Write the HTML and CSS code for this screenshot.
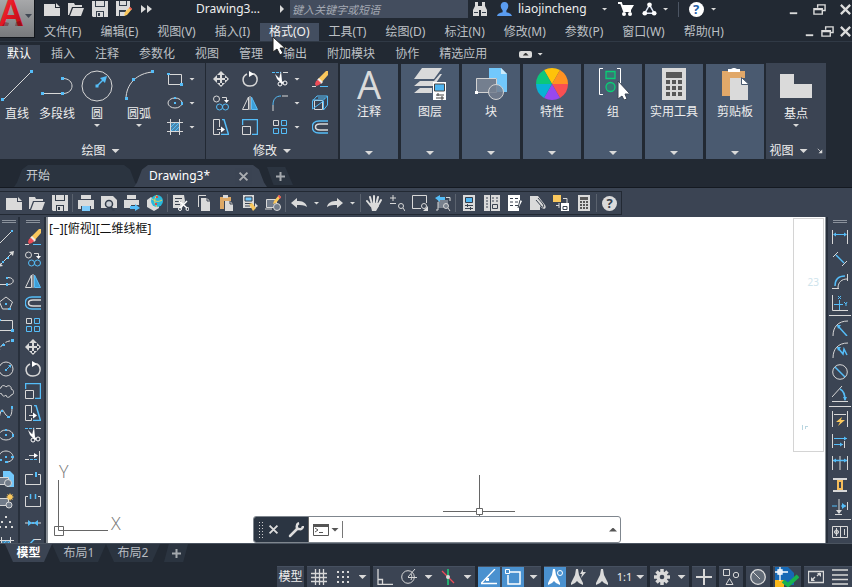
FILE: index.html
```html
<!DOCTYPE html>
<html lang="zh-CN">
<head>
<meta charset="utf-8">
<title>Drawing3</title>
<link rel="stylesheet" href="styles.css">
</head>
<body>
<svg class="sprite" aria-hidden="true">
  <defs>
    <linearGradient id="red" x1="0" y1="0" x2="1" y2="1"><stop offset="0" stop-color="#ff3b44"/><stop offset=".5" stop-color="#e01420"/><stop offset="1" stop-color="#a80d18"/></linearGradient>
    <!-- files and title bar -->
    <symbol id="new" viewBox="0 0 16 16"><path class="lf" d="M0 3h11v4h5v8H0z"/><path class="lf" d="M12 2l4 4h-4z"/></symbol>
    <symbol id="open" viewBox="0 0 16 16"><path class="lf" d="M0 2h6l1 2h7v2H4L1 14H0z"/><path class="lf" d="M5 7h11l-3 8H2z"/></symbol>
    <symbol id="save" viewBox="0 0 16 16"><path class="lf" d="M0 0h16v16H1l-1-1z"/><path class="df" d="M3 0h10v6H3zM4 10h8v6H4z"/><path class="lf" d="M4 0h8v5H4zM5 11h6v5H5z"/><path class="df" d="M6 12h2v3H6z"/></symbol>
    <symbol id="saveas" viewBox="0 0 16 16"><path class="lf" d="M0 0h14v9l-6 6H0z"/><path class="df" d="M3 0h8v5H3zM3 9h7v6H3z"/><path class="lf" d="M4 0h6v4H4zM4 11h5v4H4z"/><path class="yf" d="M8 15l1-4 5-5 2 2-5 6z"/><path fill="#ef4c59" d="M13 7l1-1 2 2-1 1z"/></symbol>
    <symbol id="ff" viewBox="0 0 16 16"><path class="lf" d="M3 4l5 4-5 4zM9 4l5 4-5 4z"/></symbol>
    <symbol id="find" viewBox="0 0 16 16"><path class="lf" d="M3 1h3v4h4V1h3v4l2 4v6H9V9H7v6H1V9l2-4z"/><path class="df" d="M2 11h4v1H2zM10 11h4v1h-4z"/></symbol>
    <symbol id="user" viewBox="0 0 16 16"><path fill="#5a9cf0" d="M8 0c5 0 5 6 2 9v2c3 1 5 1 6 4H0c1-3 3-3 6-4V9C3 6 3 0 8 0z"/></symbol>
    <symbol id="cart" viewBox="0 0 16 16"><path fill="none" stroke="#fff" stroke-width="2" d="M0 2h3l3 8h7"/><path class="wf" d="M4 4h12l-3 5H6z"/><circle class="wf" cx="6" cy="13" r="2"/><circle class="wf" cx="12" cy="13" r="2"/></symbol>
    <symbol id="share" viewBox="0 0 16 16"><path fill="none" stroke="#dfe6f5" stroke-width="1.6" d="M8 3L3 12h10z"/><circle class="wf" cx="8" cy="3" r="2.5"/><circle class="wf" cx="3" cy="12" r="2.5"/><circle class="wf" cx="13" cy="12" r="2.5"/></symbol>
    <symbol id="min" viewBox="0 0 14 14"><path class="lf" d="M3 10h8v2H3z"/></symbol>
    <symbol id="restore" viewBox="0 0 14 14"><path class="l2" d="M5 5V2h8v6h-3"/><path class="l2" d="M1 6h9v6H1zM1 7h9"/></symbol>
    <symbol id="close" viewBox="0 0 14 14"><path fill="none" stroke="#dcdcdc" stroke-width="2.4" d="M2 2l10 10M12 2L2 12"/></symbol>
    <!-- drawing tools -->
    <symbol id="line-l" viewBox="0 0 32 32"><path class="l" d="M2 30L30 2"/><path class="bf" d="M0 28h3v3H0zM29 0h3v3h-3z"/></symbol>
    <symbol id="pline-l" viewBox="0 0 32 32"><path class="l" d="M2 23.500h20M22 8.500c12 0 12 15 0 15"/><path class="bf" d="M0 22h3v3H0zM20 22h3v3h-3zM20 7h3v3h-3z"/></symbol>
    <symbol id="circle-l" viewBox="0 0 32 32"><circle class="l" cx="16" cy="16" r="15"/><path class="b" stroke-width="1.500" d="M16 16l8-8"/><path class="bf" d="M26 6l-2 7-5-5zM14.500 14.500h3v3h-3z"/></symbol>
    <symbol id="arc-l" viewBox="0 0 32 32"><path class="l" d="M3 29C3 14 14 3 30 2"/><path class="bf" d="M2 27h3v3H2zM28 0h3v3h-3zM9 8h3v3H9z"/></symbol>
    <symbol id="line" viewBox="0 0 16 16"><path class="l" d="M1 15L14 2"/><path class="bf" d="M0 14h2v2H0zM13 1h2v2h-2z"/></symbol>
    <symbol id="xline" viewBox="0 0 16 16"><path class="l" d="M2 14L14 2"/><path class="lf" d="M0 16l1-5 4 4zM16 0l-5 1 4 4z"/><path class="bf" d="M4 10h2v2H4zM9 6h2v2H9z"/></symbol>
    <symbol id="pline" viewBox="0 0 16 16"><path class="l" d="M1 11.500h9M10 4.500c7 0 7 7 0 7"/><path class="bf" d="M0 10h2v2H0zM8 10h2v3H8zM8 4h2v2H8z"/></symbol>
    <symbol id="polygon" viewBox="0 0 16 16"><path class="l" d="M8 2l6.500 5-3 7h-7l-3-7z"/><path class="bf" d="M7 8h2v2H7zM10 13h3v2h-3z"/></symbol>
    <symbol id="rect" viewBox="0 0 16 16"><path class="l" d="M1.500 3.500h13v10h-13z"/><path class="bf" d="M0 2h3v2H0zM13 12h3v3h-3z"/></symbol>
    <symbol id="arc" viewBox="0 0 16 16"><path class="l" stroke-dasharray="5 2" d="M1 15C1 7 6 2 15 1.500"/><path class="bf" d="M0 13h2v3H0zM13 0h3v3h-3zM4 5h3v2H4z"/></symbol>
    <symbol id="circle" viewBox="0 0 16 16"><circle class="l" cx="8" cy="8" r="7"/><path class="b" d="M8 9l4-4"/><path class="bf" d="M7 8h2v2H7zM10 4h3v3z"/></symbol>
    <symbol id="cloud" viewBox="0 0 16 16"><path class="l" d="M4 11C-1 10 0 5 3 5c0-3 4-3 5-1 3-3 6 0 5 2 4 1 3 6 0 6-1 3-5 3-5 0-2 2-4 1-4-1z"/></symbol>
    <symbol id="spline" viewBox="0 0 16 16"><path class="l" d="M1 14C4-2 5 7 8 10s6 3 6-8"/><path class="bf" d="M0 13h2v3H0zM13 1h2v3h-2zM3 5h2v2H3zM9 11h3v2H9z"/></symbol>
    <symbol id="ellipse" viewBox="0 0 16 16"><ellipse class="l" cx="8" cy="8" rx="7" ry="5"/><path class="bf" d="M7 2h2v2H7zM7 7h2v2H7zM14 7h2v3h-2z"/></symbol>
    <symbol id="earc" viewBox="0 0 16 16"><path class="l" d="M2 11C-1 4 5 2 8 2s7 2 7 6c0 3-2 4-5 5"/><path class="bf" d="M7 7h2v2H7zM7 12h3v2H7zM1 10h3v2H1zM13 7h3v2h-3z"/></symbol>
    <symbol id="insert" viewBox="0 0 16 16"><path fill="#72c8fc" d="M5 0h7l4 4v12H9V6H5z"/><path fill="#727c8a" stroke="#d8d8d8" d="M.5 6.500h10v7H.5z"/><circle fill="#727c8a" stroke="#d8d8d8" cx="10" cy="12" r="3.500"/></symbol>
    <symbol id="block" viewBox="0 0 16 16"><path fill="#727c8a" stroke="#d8d8d8" d="M.5 5.500h10v7H.5z"/><circle fill="#727c8a" stroke="#d8d8d8" cx="11" cy="12" r="3"/><path class="yf" d="M12 0l1 2 2-1-1 2 2 1-2 1 1 2-2-1-1 2-1-2-2 1 1-2-2-1 2-1-1-2 2 1z"/></symbol>
    <symbol id="points" viewBox="0 0 16 16"><path class="lf" d="M7 1h2v2H7zM3 6h2v2H3zM11 6h2v2h-2zM7 11h2v2H7zM1 11h2v2H1zM13 11h2v2h-2z"/></symbol>
    <symbol id="hatch" viewBox="0 0 16 16"><path class="bf" opacity=".55" d="M4 4h8v8H4z"/><path class="b" d="M4 8l4-4M4 12l8-8M8 12l4-4"/><path class="l" d="M3.500 0v16M12.500 0v16M0 3.500h16M0 12.500h16"/></symbol>
    <!-- modify tools -->
    <symbol id="erase" viewBox="0 0 16 16"><path fill="#fac85d" d="M6 8l8-8h2v4l-7 8z"/><path fill="#f4ebe4" d="M5 9l2-2 4 4-2 2z"/><path fill="#ee4c57" d="M4 10l2-1 3 3-2 2-3 1-1-2z"/><path class="l" d="M0 15.500h4"/><path class="b" d="M8 15.500h8"/></symbol>
    <symbol id="copy" viewBox="0 0 16 16"><circle class="l" cx="3.500" cy="4" r="3"/><circle class="b" cx="6.500" cy="12" r="3"/><circle class="b" cx="12.500" cy="12" r="3"/><path class="l" d="M9 2.500h4.500V6"/><path class="wf" d="M11 5h5l-2.500 3z"/></symbol>
    <symbol id="mirror" viewBox="0 0 16 16"><path class="l" d="M6.500 2v12.500h-6z"/><path fill="#3c9fd8" stroke="#5cbdf6" d="M9.500 2v12.500h6z"/><path class="l" d="M8 1v14"/></symbol>
    <symbol id="offset" viewBox="0 0 16 16"><path class="b" stroke-width="1.500" d="M16 2H7C-2 2-2 14 7 14h9"/><path class="l" stroke-width="1.500" d="M16 5H8C2 5 2 11 8 11h8"/></symbol>
    <symbol id="array" viewBox="0 0 16 16"><path class="l" d="M1.500 1.500h5v5h-5z"/><path class="b" d="M9.500 1.500h5v5h-5zM1.500 9.500h5v5h-5zM9.500 9.500h5v5h-5z"/></symbol>
    <symbol id="move" viewBox="0 0 16 16"><path class="lf" d="M7 2h2v12H7zM2 7h12v2H2zM8 0l4 4H4zM8 16l4-4H4zM0 8l4-4v8zM16 8l-4-4v8z"/></symbol>
    <symbol id="rotate" viewBox="0 0 16 16"><path class="l" stroke-width="1.500" d="M5 3C-1 6 0 15 8 15c8 0 9-9 4-12L8 3"/><path class="wf" d="M7 0l5 3-5 3z"/></symbol>
    <symbol id="scale" viewBox="0 0 16 16"><path class="b" stroke-width="1.500" d="M.5 6V.500h15v15H10"/><path class="l" d="M.5 7.500h8v8h-8z"/></symbol>
    <symbol id="stretch" viewBox="0 0 16 16"><path class="l" d="M6.500 8V.500h-6v15h6V13"/><path class="b" stroke-width="1.500" d="M9 .500h2l4.500 15H8"/><path class="l" d="M4 10.500h6"/><path class="wf" d="M8 7.500l4 3-4 3z"/></symbol>
    <symbol id="trim" viewBox="0 0 16 16"><path class="b" stroke-dasharray="3 1" d="M0 1.500h9"/><path class="l" d="M11 1.500h5"/><path class="wf" d="M9 0l1 10-2 1-1-3zM3 3l9 9-2 1-5-5z"/><circle class="w" cx="8" cy="13" r="2"/><circle class="w" cx="13" cy="12" r="2"/></symbol>
    <symbol id="extend" viewBox="0 0 16 16"><path class="l" d="M4 6.500h7M14.500 2v12"/><path class="wf" d="M9 4l4 2.500L9 9z"/><path class="l" d="M0 10.500h4"/><path class="b" stroke-dasharray="3 1" d="M5 10.500h8"/></symbol>
    <symbol id="break1" viewBox="0 0 16 16"><path class="l" d="M8 3.500H.500v10h15v-10H13"/><path class="b" stroke-width="2" d="M11 1v5"/></symbol>
    <symbol id="break2" viewBox="0 0 16 16"><path class="l" d="M3 3.500H.500v10h15v-10H13"/><path class="b" stroke-width="1.500" d="M5.500 1v5M10.500 1v5"/></symbol>
    <symbol id="join" viewBox="0 0 16 16"><path class="l" d="M0 8h16"/><path class="bf" d="M3 5l4 3-4 3zM13 5L9 8l4 3zM7 7h2v2H7z"/></symbol>
    <symbol id="chamfer" viewBox="0 0 16 16"><path class="l" d="M8 2.500h8M2 10v6"/><path class="b" stroke-width="1.500" d="M9 2.500L2 10"/></symbol>
    <symbol id="fillet" viewBox="0 0 16 16"><path class="b" d="M1 10C1 4 4 1 9 1"/><path class="l" d="M1 10v6M10 1h6"/></symbol>
    <symbol id="cube" viewBox="0 0 16 16"><path class="l" d="M2.500 5.500h8v9h-8z"/><path class="b" d="M.5 14V6L5 1h10.500v9l-4 5V6zM.5 5h11l4-4M6 3h7"/></symbol>
    <!-- dimension tools -->
    <symbol id="dlin" viewBox="0 0 16 16"><path class="l" d="M.5 1v14M15.500 1v14"/><path class="b" d="M2 5.500h12"/><path class="bf" d="M1 5.500l3-2v4zM15 5.500l-3-2v4z"/></symbol>
    <symbol id="dal" viewBox="0 0 16 16"><path class="l" d="M1 6l5-5M10 15l5-5"/><path class="b" stroke-width="1.500" d="M4 4l8 8"/></symbol>
    <symbol id="darc" viewBox="0 0 16 16"><path class="b" stroke-width="1.500" d="M3 13C3 6 6 3 13 3"/><path class="l" d="M6 15c0-6 4-9 9-9M0 15.500h7M15.500 1v7"/></symbol>
    <symbol id="dord" viewBox="0 0 16 16"><path class="l" d="M.5 0v15.500H16"/><path class="b" d="M7.500 5v10M2 9.500h9M6 1l3 3M9 1L6 4M12 7l2 2 1-2M14 9v2"/></symbol>
    <symbol id="drad" viewBox="0 0 16 16"><path class="l" d="M1 16C1 7 6 1 16 1"/><path class="b" stroke-width="1.500" d="M6 6l9 10"/><path class="bf" d="M5 5h4L6 9z"/></symbol>
    <symbol id="djog" viewBox="0 0 16 16"><path class="l" d="M1 16C1 7 6 1 16 1"/><path class="b" stroke-width="1.500" d="M6 6l5 6 1-5 3 6"/><path class="bf" d="M5 5h4L6 9z"/></symbol>
    <symbol id="ddia" viewBox="0 0 16 16"><circle class="l" cx="8" cy="8" r="7.300"/><path class="b" stroke-width="1.500" d="M3 3l10 10"/></symbol>
    <symbol id="dang" viewBox="0 0 16 16"><path class="l" d="M0 15.500h16M0 11L10 0"/><path class="b" stroke-width="1.500" d="M8 3c4 2 5 6 5 11"/><path class="bf" d="M11 11h4l-2 4z"/></symbol>
    <symbol id="dquick" viewBox="0 0 16 16"><path class="l" d="M.5 0v16M15.500 0v16M2 3.500h12"/><path class="yf" d="M10 6L4 11h4l-2 4 7-6H9z"/></symbol>
    <symbol id="dbase" viewBox="0 0 16 16"><path class="l" d="M.5 1v14M12.500 8v7"/><path class="b" d="M2 5.500h13M2 11.500h9"/><path class="bf" d="M15 5.500l-3-2v4zM11 11.500l-3-2v4z"/></symbol>
    <symbol id="dcont" viewBox="0 0 16 16"><path class="l" d="M.5 1v14M8 1v14M15.500 1v14"/><path class="b" stroke-width="1.500" d="M1 5.500h14"/><path class="bf" d="M1 5.500l3-2v4zM15 5.500l-3-2v4z"/></symbol>
    <symbol id="dspace" viewBox="0 0 16 16"><path class="l" stroke-width="2" d="M1 2h14M1 14h14"/><path fill="none" stroke="#f5bd5b" stroke-width="2" d="M6 4h4v8H6z"/></symbol>
    <symbol id="dbreak" viewBox="0 0 16 16"><path class="b" d="M0 7h5M9 7h5"/><path class="bf" d="M10 4l4 3-4 3z"/><path class="l" d="M7 0v14M3 15.500h7M15.500 3v8"/><path class="lf" d="M4 11h6l-3 4z"/></symbol>
    <symbol id="dtol" viewBox="0 0 16 16"><path class="l" d="M.5 2.500h15v11H.5zM8.500 2v12M4.500 4v8M2 8h5M12.500 5v6"/><circle class="l" cx="4.500" cy="8" r="2"/></symbol>
    <!-- standard toolbar -->
    <symbol id="print" viewBox="0 0 16 16"><path class="lf" d="M3 0h10v4H3zM0 5h16v9h-3v-3H3v3H0z"/><path fill="#7ecbfb" d="M4 11h8v5H4z"/></symbol>
    <symbol id="preview" viewBox="0 0 16 16"><path class="lf" d="M0 1h12l4 4v8H0z"/><circle fill="#c9ced4" stroke="#333d4b" stroke-width="1.500" cx="8" cy="9" r="3.500"/><path stroke="#333d4b" stroke-width="2" d="M10 12l3 4"/></symbol>
    <symbol id="publish" viewBox="0 0 16 16"><path class="lf" d="M3 0h9v4H3zM0 5h15v5H7v3H0z"/><path class="bf" d="M6 11h5V9l5 4-5 3v-2H6z"/></symbol>
    <symbol id="globe" viewBox="0 0 16 16"><path class="lf" d="M0 5l4-3 8 6v5l-5 3-7-4z"/><circle fill="#28b9dc" cx="10" cy="6" r="6"/><path fill="none" stroke="#e9d35c" d="M5 4c4 3 7 3 10 1M10 0c-4 5-2 9 0 12"/><path fill="#e04b4b" d="M9 1h2v2H9zM8 8h2v2H8z"/></symbol>
    <symbol id="cutc" viewBox="0 0 16 16"><path class="lf" d="M0 0h11l1 6-3 7H0z"/><path class="d" d="M2 3.500h7M2 6.500h6M2 9.500h5"/><path class="w" stroke-width="1.500" d="M6 6l8 7M14 6l-7 7"/><circle class="w" cx="14.500" cy="14" r="1.500"/><circle class="w" cx="7" cy="14" r="1.500"/></symbol>
    <symbol id="copyc" viewBox="0 0 16 16"><path class="l" d="M2.500 12V.500H10"/><path class="lf" d="M5 3h6l3 3v10H5z"/><path class="d" d="M11 3v3h3"/></symbol>
    <symbol id="pastec" viewBox="0 0 16 16"><path fill="#dca866" d="M1 2h11v4H5v8H1z"/><path class="lf" d="M4 0h5v3H4zM6 6h5l3 3v7H6z"/><path class="d" d="M11 6v3h3"/></symbol>
    <symbol id="match" viewBox="0 0 16 16"><path class="lf" d="M1 0h11v13H1z"/><path fill="#72c8fc" stroke="#333d4b" d="M3 2h7v4H3z"/><path class="d" d="M3 8.500h7M3 11h5"/><path class="yf" d="M7 9l3-1 4 5-3 3z"/><path class="lf" d="M13 8l3 3-3 2z"/></symbol>
    <symbol id="bedit" viewBox="0 0 16 16"><path fill="#727c8a" stroke="#d8d8d8" d="M1.500 4.500h10v8h-10zM0 14h7"/><circle fill="#727c8a" stroke="#d8d8d8" cx="12" cy="12" r="3.500"/><path class="yf" d="M8 9l1-3 5-6 2 2-5 6z"/><path fill="#ef4c59" d="M13 1l1-1 2 2-1 2z"/></symbol>
    <symbol id="undo" viewBox="0 0 16 16"><path class="lf" d="M0 8l6-5v3c5 0 9 1 10 6-3-2-6-2-10-2v3z"/></symbol>
    <symbol id="redo" viewBox="0 0 16 16"><path class="lf" d="M16 8l-6-5v3c-5 0-9 1-10 6 3-2 6-2 10-2v3z"/></symbol>
    <symbol id="pan" viewBox="0 0 16 16"><path fill="none" stroke="#dedede" stroke-width="2" stroke-linecap="round" d="M1 6l4 5M4 2l2 7M8 1v8M12 2l-2 8M15 5l-4 7"/><path class="lf" d="M4 8h8l1 3-3 5H6z"/></symbol>
    <symbol id="zoomrt" viewBox="0 0 16 16"><path class="l" d="M4 0v6M1 3h6M1 8.500h6"/><circle class="l" cx="12" cy="11" r="2.500"/><path class="l" d="M14 13l2 3"/></symbol>
    <symbol id="zoomwin" viewBox="0 0 16 16"><path class="l" d="M9 13.500H.500V.500h14V8"/><circle class="l" cx="12" cy="11" r="2.500"/><path class="lf" d="M16 11v5h-5z"/></symbol>
    <symbol id="zoomprev" viewBox="0 0 16 16"><path fill="#79818d" d="M3 5h10v8H3z"/><path class="l" d="M3 7v8H1M11 2.500h4V6"/><path class="bf" d="M0 3l5-3v2h5v3H5v2z"/><circle class="l" cx="11" cy="11" r="2.500"/><path class="l" d="M13 13l2 3"/></symbol>
    <symbol id="props" viewBox="0 0 16 16"><path class="lf" d="M2 0h12v16H2z"/><path fill="#50b5f0" stroke="#333d4b" d="M4.500 2.500h7v5h-7z"/><path class="d" d="M4 10.500h8M4 13.500h8M6.500 9v3M9.500 12v3"/></symbol>
    <symbol id="dcenter" viewBox="0 0 16 16"><path class="lf" d="M0 0h16v16H0z"/><path class="d" d="M6.500 0v16M2 3h2M2 6h2M2 9h2M2 12h2M8 3h2M12 3h2M8 6h2M12 6h2M8.500 9.500h5v4h-5z"/></symbol>
    <symbol id="palettes" viewBox="0 0 16 16"><path class="wf" d="M1 0h12v5l2 1-3 6v4H1z"/><path class="d" d="M3 3.500h3M8 3.500h3M3 7h3M8 7h3M3 10.500h3M8 10.500h3M11 13l2-8"/></symbol>
    <symbol id="sheets" viewBox="0 0 16 16"><path class="lf" d="M0 1h8l7 9c2 3-1 5-3 3l-2-2v4H0z"/><path class="d" d="M6 5l6 7c2 1 2-1 1-3L8 3"/></symbol>
    <symbol id="markup" viewBox="0 0 16 16"><path class="yf" d="M0 0h8v7H0z"/><path class="l" d="M3 10.500h3M10 3.500h4V8M6 8v5"/><path class="wf" d="M8 8h8v8H8z"/><path class="d" d="M10 11.500h4v3h-4z"/></symbol>
    <symbol id="calc" viewBox="0 0 24 32"><path class="lf" d="M0 0h24v32H0z"/><path fill="#585858" d="M4 4h16v6H4zM4 12h4v4H4zM10 12h4v4h-4zM16 12h4v4h-4zM4 18h4v4H4zM10 18h4v4h-4zM16 18h4v4h-4zM4 24h4v4H4zM10 24h4v4h-4zM16 24h4v4h-4z"/></symbol>
    <!-- large ribbon pictures -->
    <symbol id="layers" viewBox="0 0 32 32"><path class="lf" d="M8 0h20L20 11H0zM6 13h14l6-7h2l-8 12H0zM6 20h12v5H0z"/><path class="wf" d="M19 14h13v18H19z"/><path fill="#50b5f0" stroke="#444" d="M20.500 16h10v7h-10z"/><path stroke="#444" d="M22 27h8M22 30h8M24 25v3M28 28v4"/></symbol>
    <symbol id="blocks" viewBox="0 0 32 32"><path fill="#72c8fc" d="M14 0h12l6 6v18H22V10h-8z"/><path fill="#cdeafa" d="M26 0v6h6z"/><path fill="#747f8f" stroke="#d2d2d2" d="M1.500 10.500h20v14h-20z"/><circle fill="#747f8f" fill-opacity=".85" stroke="#d2d2d2" cx="21" cy="24" r="7.500"/><path class="wf" d="M0 23h3v3H0z"/></symbol>
    <symbol id="wheel" viewBox="-16 -16 32 32"><path fill="#ffc20a" d="M0 0L-8-14Q0-18 8-14z"/><path fill="#ff9222" d="M0 0L8-14Q16-9 16 0z"/><path fill="#f94f52" d="M0 0h16Q16 9 8 14z"/><path fill="#9748ef" d="M0 0l8 14Q0 18-8 14z"/><path fill="#08b2d5" d="M0 0l-8 14Q-16 9-16 0z"/><path fill="#0bc77b" d="M0 0h-16Q-16-9-8-14z"/></symbol>
    <symbol id="group" viewBox="0 0 32 32"><path fill="none" stroke="#fff" d="M6 .500H2.500v26H6M20 .500h3.500V18"/><path fill="#3a7574" stroke="#09cf76" stroke-width="1.300" d="M9 3.500h9v7H9z"/><circle fill="#3a7574" stroke="#09cf76" stroke-width="1.300" cx="13.500" cy="19" r="4.500"/><path class="wf" stroke="#3b4453" d="M21 13v18l4-3 2 4 3-1-2-5h5z"/></symbol>
    <symbol id="clip" viewBox="0 0 28 32"><path fill="#e1a869" d="M1 3h23v7H9v18H1z"/><path class="wf" d="M7 1h3l2-1h2l2 1h3v3H7z"/><path class="lf" d="M9 10h11l7 6v16H9z"/><path fill="#fff" stroke="#4a5a70" d="M20.500 9.500v7H28z"/></symbol>
    <symbol id="base" viewBox="0 0 32 24"><path class="lf" d="M0 0h14v10h18v14H0z"/></symbol>
    <!-- status bar -->
    <symbol id="grid" viewBox="0 0 16 16"><path class="l" stroke-width="1.300" d="M4.500 0v16M8.500 0v16M12.500 0v16M0 4.500h16M0 8.500h16M0 12.500h16"/></symbol>
    <symbol id="snap" viewBox="0 0 16 16"><path class="l" stroke-width="2" stroke-dasharray="2 3" d="M2 3h12M2 8h12M2 13h12"/></symbol>
    <symbol id="ortho" viewBox="0 0 16 16"><path class="l" stroke-width="1.300" d="M1 0v15.500h15M1 10.500h4.500v5"/></symbol>
    <symbol id="polar" viewBox="0 0 16 16"><circle class="l" cx="7" cy="8" r="6.300"/><path class="l" d="M7 8l7-8M7 8.500h9M10 5c1 1 1 4 0 6"/></symbol>
    <symbol id="iso" viewBox="0 0 16 16"><path stroke="#24ae70" stroke-width="2" d="M8 0v16"/><path stroke="#ee4c57" stroke-width="1.300" d="M2 2l12 12"/><circle class="lf" cx="8" cy="8" r="2"/></symbol>
    <symbol id="track" viewBox="0 0 16 16"><path class="w" stroke-width="1.300" d="M14 0L0 14.500h16"/><path class="wf" d="M5 9h3v3H5z"/></symbol>
    <symbol id="osnap" viewBox="0 0 16 16"><path class="w" stroke-width="1.500" d="M5 3h10v12H3V6"/><path class="w" d="M.5.500h4v4h-4z"/></symbol>
    <symbol id="anno" viewBox="0 0 16 16"><path class="lf" d="M7 0h2l1 6 4 8v2l-4-2-2-2-2 2-4 2v-2l4-8z"/></symbol>
    <symbol id="annoo" viewBox="0 0 16 16"><path class="wf" d="M6 0h2l1 6 4 8v2l-4-2-2-2-2 2-4 2v-2l4-8z"/><circle class="w" cx="13" cy="4" r="2.500"/></symbol>
    <symbol id="annob" viewBox="0 0 16 16"><path class="lf" d="M6 0h2l1 6 4 8v2l-4-2-2-2-2 2-4 2v-2l4-8zM13 0l-3 5h2l-1 4 5-6h-3z"/></symbol>
    <symbol id="gear" viewBox="-8 -8 16 16"><path class="l" stroke-width="3.500" d="M0-8V8M-8 0H8M-5.500-5.500l11 11M5.500-5.500l-11 11"/><circle class="lf" r="5.500"/><circle fill="#3b4453" r="2.300"/></symbol>
    <symbol id="plus" viewBox="0 0 16 16"><path class="l" stroke-width="2" d="M8 0v16M0 8h16"/></symbol>
    <symbol id="plus-s" viewBox="0 0 9 9"><path fill="none" stroke="#a4a8ad" stroke-width="2" d="M4.500 0v9M0 4.500h9"/></symbol>
    <symbol id="shapes" viewBox="0 0 16 16"><path class="l" d="M.5.500h6v6h-6zM6.500 9.500l3.500 6H3z"/><circle class="l" cx="13" cy="6" r="2.700"/></symbol>
    <symbol id="disc" viewBox="0 0 16 16"><circle fill="#626b77" stroke="#ddd" stroke-width="1.300" cx="8" cy="8" r="7.300"/><path class="l" d="M3 3l7 7"/></symbol>
    <symbol id="trust" viewBox="0 0 24 20"><path fill="#1769b5" d="M0 0h13l6 6v12H0z"/><path fill="#fbb819" d="M0 13h9v7H0z"/><path class="w" stroke-width="1.300" d="M5 0v14M0 5h13M3 3h4v4H3z"/><path fill="none" stroke="#18b34d" stroke-width="4" d="M8 14l5 4L23 9"/></symbol>
    <symbol id="full" viewBox="0 0 16 16"><path class="l" stroke-width="1.300" d="M.5 2.500h15v11H.5zM4 11l3-3M9 7l3-3"/><path class="lf" d="M3 8v4h4zM9 4h4v4z"/></symbol>
    <symbol id="menu" viewBox="0 0 16 16"><path class="l" stroke-width="1.500" d="M0 1h16M0 6h16M0 10.500h16M0 15h16"/></symbol>
    <symbol id="term" viewBox="0 0 16 12"><path fill="#fff" stroke="#555" d="M.5.500h15v11H.5z"/><path fill="#555" d="M0 0h16v3H0z"/><path fill="none" stroke="#555" d="M2 4l3 2-3 2M6 8.500h4"/></symbol>
    <symbol id="wrench" viewBox="0 0 16 16"><path fill="none" stroke="#ddd" stroke-width="2.500" stroke-linecap="round" d="M2 14l7-7"/><path fill="none" stroke="#ddd" stroke-width="2.500" d="M11 1c-3 1-3 6 0 6 2 1 4-1 4-3"/></symbol>
  </defs>
</svg>

<header class="head">
  <button class="app" aria-label="应用程序菜单"><svg viewBox="0 0 34 38"><text x="-2" y="26" fill="url(#red)">A</text><path fill="#5e0a10" opacity=".4" d="M2 26l3-4 4 1-1 3zM15 26l1-4 4-1 2 5z"/><path fill="#414854" d="M25 14h7l-3.500 4z"/></svg></button>
  <div class="titlebar">
    <button class="ico" aria-label="新建"><svg><use href="#new"/></svg></button>
    <button class="ico" aria-label="打开"><svg><use href="#open"/></svg></button>
    <button class="ico" aria-label="保存"><svg><use href="#save"/></svg></button>
    <button class="ico" aria-label="另存为"><svg><use href="#saveas"/></svg></button>
    <button class="ico" aria-label="更多"><svg><use href="#ff"/></svg></button>
    <h1 class="doc">Drawing3...</h1>
    <i class="caret side"></i>
    <input class="search" aria-label="搜索" placeholder="键入关键字或短语">
    <button class="ico" aria-label="搜索"><svg><use href="#find"/></svg></button>
    <button class="account"><svg><use href="#user"/></svg><span>liaojincheng</span><i class="caret"></i></button>
    <button class="ico" aria-label="应用商店"><svg><use href="#cart"/></svg></button>
    <button class="drop" aria-label="联机"><svg><use href="#share"/></svg><i class="caret"></i></button>
    <button class="drop helpdrop" aria-label="帮助"><b class="q">?</b><i class="caret"></i></button>
    <div class="win">
      <button aria-label="最小化"><svg><use href="#min"/></svg></button><button aria-label="还原"><svg><use href="#restore"/></svg></button><button aria-label="关闭"><svg><use href="#close"/></svg></button>
    </div>
  </div>
  <nav class="menus">
    <button>文件(F)</button><button>编辑(E)</button><button>视图(V)</button><button>插入(I)</button><button class="on">格式(O)</button><button>工具(T)</button><button>绘图(D)</button><button>标注(N)</button><button>修改(M)</button><button>参数(P)</button><button>窗口(W)</button><button>帮助(H)</button>
    <div class="win inner">
      <button aria-label="最小化图形"><svg><use href="#min"/></svg></button><button aria-label="还原图形"><svg><use href="#restore"/></svg></button><button aria-label="关闭图形"><svg><use href="#close"/></svg></button>
    </div>
  </nav>
</header>

<nav class="rtabs">
  <button class="on">默认</button><button>插入</button><button>注释</button><button>参数化</button><button>视图</button><button>管理</button><button>输出</button><button>附加模块</button><button>协作</button><button>精选应用</button>
  <button class="fold" aria-label="最小化功能区"><b><i class="caret up"></i></b><i class="caret"></i></button>
</nav>

<section class="ribbon">
  <div class="panel draw">
    <div class="tools">
      <button class="big w1"><svg><use href="#line-l"/></svg>直线</button>
      <button class="big w2"><svg><use href="#pline-l"/></svg>多段线</button>
      <button class="big w1"><svg><use href="#circle-l"/></svg>圆<i class="caret"></i></button>
      <button class="big w3"><svg><use href="#arc-l"/></svg>圆弧<i class="caret"></i></button>
      <div class="stack">
        <button aria-label="矩形"><svg><use href="#rect"/></svg><i class="caret"></i></button>
        <button aria-label="椭圆"><svg><use href="#ellipse"/></svg><i class="caret"></i></button>
        <button aria-label="图案填充"><svg><use href="#hatch"/></svg><i class="caret"></i></button>
      </div>
    </div>
    <button class="ptitle">绘图<i class="caret wide"></i></button>
  </div>
  <div class="panel modify">
    <div class="cells">
      <button aria-label="移动"><svg><use href="#move"/></svg></button>
      <button aria-label="旋转"><svg><use href="#rotate"/></svg></button>
      <button aria-label="修剪"><svg><use href="#trim"/></svg><i class="caret"></i></button>
      <button aria-label="删除"><svg><use href="#erase"/></svg></button>
      <button aria-label="复制"><svg><use href="#copy"/></svg></button>
      <button aria-label="镜像"><svg><use href="#mirror"/></svg></button>
      <button aria-label="圆角"><svg><use href="#fillet"/></svg><i class="caret"></i></button>
      <button aria-label="分解"><svg><use href="#cube"/></svg></button>
      <button aria-label="拉伸"><svg><use href="#stretch"/></svg></button>
      <button aria-label="缩放"><svg><use href="#scale"/></svg></button>
      <button aria-label="阵列"><svg><use href="#array"/></svg><i class="caret"></i></button>
      <button aria-label="偏移"><svg><use href="#offset"/></svg></button>
    </div>
    <button class="ptitle">修改<i class="caret wide"></i></button>
  </div>
  <button class="fly"><span class="biga">A</span>注释<i class="caret wide"></i></button>
  <button class="fly"><svg><use href="#layers"/></svg>图层<i class="caret wide"></i></button>
  <button class="fly"><svg><use href="#blocks"/></svg>块<i class="caret wide"></i></button>
  <button class="fly"><svg><use href="#wheel"/></svg>特性<i class="caret wide"></i></button>
  <button class="fly"><svg><use href="#group"/></svg>组<i class="caret wide"></i></button>
  <button class="fly"><svg><use href="#calc"/></svg>实用工具<i class="caret wide"></i></button>
  <button class="fly"><svg><use href="#clip"/></svg>剪贴板<i class="caret wide"></i></button>
  <div class="panel view">
    <div class="tools"><button class="big"><svg><use href="#base"/></svg>基点<i class="caret"></i></button></div>
    <button class="ptitle">视图<i class="caret wide"></i><svg class="launch" viewBox="0 0 8 8"><path class="l" d="M1 1l5 5"/><path class="lf" d="M7 2v5H2z"/></svg></button>
  </div>
</section>

<nav class="files">
  <button class="file first">开始</button>
  <button class="file on">Drawing3*<svg><use href="#close"/></svg></button>
  <button class="file add" aria-label="新图形"><svg><use href="#plus-s"/></svg></button>
</nav>

<div class="stdbar">
  <div class="box">
    <button aria-label="新建"><svg><use href="#new"/></svg></button><button aria-label="打开"><svg><use href="#open"/></svg></button><button aria-label="保存"><svg><use href="#save"/></svg></button><hr>
    <button aria-label="打印"><svg><use href="#print"/></svg></button><button aria-label="打印预览"><svg><use href="#preview"/></svg></button><button aria-label="发布"><svg><use href="#publish"/></svg></button><button aria-label="三维打印"><svg><use href="#globe"/></svg></button><hr>
    <button aria-label="剪切"><svg><use href="#cutc"/></svg></button><button aria-label="复制"><svg><use href="#copyc"/></svg></button><button aria-label="粘贴"><svg><use href="#pastec"/></svg></button><button aria-label="特性匹配"><svg><use href="#match"/></svg></button><button aria-label="块编辑器"><svg><use href="#bedit"/></svg></button><hr>
    <button aria-label="放弃"><svg><use href="#undo"/></svg></button><button class="thin" aria-label="放弃列表"><i class="caret"></i></button><button aria-label="重做"><svg><use href="#redo"/></svg></button><button class="thin" aria-label="重做列表"><i class="caret"></i></button><hr>
    <button aria-label="平移"><svg><use href="#pan"/></svg></button><button aria-label="实时缩放"><svg><use href="#zoomrt"/></svg></button><button aria-label="窗口缩放"><svg><use href="#zoomwin"/></svg></button><button aria-label="缩放上一个"><svg><use href="#zoomprev"/></svg></button><hr>
    <button aria-label="特性"><svg><use href="#props"/></svg></button><button aria-label="设计中心"><svg><use href="#dcenter"/></svg></button><button aria-label="工具选项板"><svg><use href="#palettes"/></svg></button><button aria-label="图纸集管理器"><svg><use href="#sheets"/></svg></button><button aria-label="标记集管理器"><svg><use href="#markup"/></svg></button><button aria-label="快速计算器"><svg><use href="#calc"/></svg></button><hr>
    <button aria-label="帮助"><b class="q">?</b></button>
  </div>
</div>

<main class="work">
  <div class="strip left1">
    <button aria-label="直线"><svg><use href="#line"/></svg></button><button aria-label="构造线"><svg><use href="#xline"/></svg></button><button aria-label="多段线"><svg><use href="#pline"/></svg></button><button aria-label="多边形"><svg><use href="#polygon"/></svg></button><button aria-label="矩形"><svg><use href="#rect"/></svg></button><button aria-label="圆弧"><svg><use href="#arc"/></svg></button><button aria-label="圆"><svg><use href="#circle"/></svg></button><button aria-label="修订云线"><svg><use href="#cloud"/></svg></button><button aria-label="样条曲线"><svg><use href="#spline"/></svg></button><button aria-label="椭圆"><svg><use href="#ellipse"/></svg></button><button aria-label="椭圆弧"><svg><use href="#earc"/></svg></button><button aria-label="插入块"><svg><use href="#insert"/></svg></button><button aria-label="创建块"><svg><use href="#block"/></svg></button><button aria-label="点"><svg><use href="#points"/></svg></button><button aria-label="图案填充"><svg><use href="#hatch"/></svg></button>
  </div>
  <div class="strip left2">
    <button aria-label="删除"><svg><use href="#erase"/></svg></button><button aria-label="复制"><svg><use href="#copy"/></svg></button><button aria-label="镜像"><svg><use href="#mirror"/></svg></button><button aria-label="偏移"><svg><use href="#offset"/></svg></button><button aria-label="阵列"><svg><use href="#array"/></svg></button><button aria-label="移动"><svg><use href="#move"/></svg></button><button aria-label="旋转"><svg><use href="#rotate"/></svg></button><button aria-label="缩放"><svg><use href="#scale"/></svg></button><button aria-label="拉伸"><svg><use href="#stretch"/></svg></button><button aria-label="修剪"><svg><use href="#trim"/></svg></button><button aria-label="延伸"><svg><use href="#extend"/></svg></button><button aria-label="打断于点"><svg><use href="#break1"/></svg></button><button aria-label="打断"><svg><use href="#break2"/></svg></button><button aria-label="合并"><svg><use href="#join"/></svg></button><button aria-label="倒角"><svg><use href="#chamfer"/></svg></button>
  </div>
  <section class="canvas">
    <div class="viewlabel"><button>[−]</button><button>[俯视]</button><button>[二维线框]</button></div>
    <svg class="ucs" viewBox="0 0 80 84"><path d="M6.500 26v50.500H56M2.500 72.500h9v9h-9z"/><text x="7" y="24">Y</text><text x="59" y="76">X</text></svg>
    <svg class="cross" viewBox="0 0 72 42"><path d="M36.500 0v33M36.500 40v2M0 36.500h33M40 36.500h32M33.500 33.500h6v6h-6z"/></svg>
    <div class="navbox"><span>23</span><svg viewBox="0 0 6 6"><path d="M.5 0v5M3 1.500h3M3.500 1v3"/></svg></div>
    <div class="cmd">
      <div class="grip"><i class="dots"></i><button aria-label="关闭命令行"><svg class="x"><use href="#close"/></svg></button><button aria-label="自定义"><svg><use href="#wrench"/></svg></button></div>
      <button class="recent" aria-label="最近命令"><svg><use href="#term"/></svg><i class="caret wide"></i></button>
      <input aria-label="命令">
      <button class="more" aria-label="命令历史"><i class="caret wide up"></i></button>
    </div>
  </section>
  <div class="strip right">
    <button aria-label="线性"><svg><use href="#dlin"/></svg></button><button aria-label="对齐"><svg><use href="#dal"/></svg></button><button aria-label="弧长"><svg><use href="#darc"/></svg></button><button aria-label="坐标"><svg><use href="#dord"/></svg></button><hr>
    <button aria-label="半径"><svg><use href="#drad"/></svg></button><button aria-label="折弯"><svg><use href="#djog"/></svg></button><button aria-label="直径"><svg><use href="#ddia"/></svg></button><button aria-label="角度"><svg><use href="#dang"/></svg></button><hr>
    <button aria-label="快速标注"><svg><use href="#dquick"/></svg></button><button aria-label="基线"><svg><use href="#dbase"/></svg></button><button aria-label="连续"><svg><use href="#dcont"/></svg></button><button aria-label="等距标注"><svg><use href="#dspace"/></svg></button><button aria-label="折断标注"><svg><use href="#dbreak"/></svg></button><hr>
    <button aria-label="公差"><svg><use href="#dtol"/></svg></button>
  </div>
</main>

<nav class="layouts">
  <button class="on">模型</button><button>布局1</button><button>布局2</button><button class="add" aria-label="新建布局"><svg><use href="#plus-s"/></svg></button>
</nav>

<footer class="status">
  <div><button class="txt">模型</button></div>
  <div><button aria-label="栅格"><svg><use href="#grid"/></svg></button><button aria-label="捕捉"><svg><use href="#snap"/></svg></button><button class="arr" aria-label="捕捉设置"><i class="caret wide"></i></button></div>
  <div><button aria-label="正交"><svg><use href="#ortho"/></svg></button><button aria-label="极轴"><svg><use href="#polar"/></svg></button><button class="arr" aria-label="极轴设置"><i class="caret wide"></i></button><button aria-label="等轴测"><svg><use href="#iso"/></svg></button><button class="arr" aria-label="等轴测设置"><i class="caret wide"></i></button></div>
  <div class="tight"><button class="on" aria-label="对象追踪"><svg><use href="#track"/></svg></button><button class="on" aria-label="对象捕捉"><svg><use href="#osnap"/></svg></button><button class="arr" aria-label="捕捉模式"><i class="caret wide"></i></button></div>
  <div><button class="on" aria-label="注释可见性"><svg><use href="#annoo"/></svg></button><button aria-label="自动缩放"><svg><use href="#annob"/></svg></button><button aria-label="注释比例"><svg><use href="#anno"/></svg></button><button class="txt ratio">1:1<i class="caret wide"></i></button></div>
  <div><button aria-label="切换工作空间"><svg><use href="#gear"/></svg></button><button class="arr" aria-label="工作空间列表"><i class="caret wide"></i></button></div>
  <div><button aria-label="注释监视器"><svg><use href="#plus"/></svg></button></div>
  <div><button aria-label="隔离对象"><svg><use href="#shapes"/></svg></button></div>
  <div><button aria-label="硬件加速"><svg><use href="#disc"/></svg></button></div>
  <div><button class="trust" aria-label="受信任的图形"><svg><use href="#trust"/></svg></button></div>
  <div><button aria-label="全屏"><svg><use href="#full"/></svg></button><button aria-label="自定义"><svg><use href="#menu"/></svg></button></div>
</footer>
<svg class="pointer" viewBox="0 0 14 20" aria-hidden="true"><path d="M1 1v15l4-3 3 6 3-2-3-5h5z"/></svg>
</body>
</html>
```
FILE: styles.css
```css
:root {
  --dark: #222933;
  --panel: #3b4453;
  --fly: #4a5a70;
  --light: #dadada;
  --blue: #4a91cf;
}
* { box-sizing: border-box; }
body {
  margin: 0;
  height: 100vh;
  display: flex;
  flex-direction: column;
  overflow: hidden;
  background: var(--dark);
  color: #eee;
  font: 12px/16px "Noto Sans", "Noto Sans CJK SC", sans-serif;
}
button {
  font: inherit;
  color: inherit;
  background: none;
  border: 0;
  padding: 0;
  display: flex;
  align-items: center;
  justify-content: center;
  white-space: nowrap;
  flex-shrink: 0;
}
svg { width: 16px; height: 16px; flex-shrink: 0; display: block; }
hr { margin: 0; border: 0; flex-shrink: 0; }
.sprite { position: absolute; width: 0; height: 0; }

/* shared strokes and fills of the icons */
.l { fill: none; stroke: #d8d8d8; }
.l2 { fill: none; stroke: #dcdcdc; stroke-width: 1.5; }
.w { fill: none; stroke: #fff; }
.b { fill: none; stroke: #55bdf8; }
.d { fill: none; stroke: #3a4350; }
.lf { fill: #dadada; }
.wf { fill: #fff; }
.bf { fill: #55bdf8; }
.df { fill: #343e4b; }
.yf { fill: #fac85d; }

.caret {
  width: 6px;
  height: 3px;
  background: var(--light);
  clip-path: polygon(0 0, 100% 0, 50% 100%);
  flex-shrink: 0;
}
.caret.wide { width: 8px; height: 4px; }
.caret.up { clip-path: polygon(0 100%, 100% 100%, 50% 0); }
.caret.side { width: 4px; height: 8px; clip-path: polygon(0 0, 100% 50%, 0 100%); }
.q {
  width: 15px;
  height: 15px;
  border-radius: 50%;
  background: var(--light);
  color: #343e4b;
  font-size: 13px;
  line-height: 15px;
  text-align: center;
}

/* header */
.head {
  display: grid;
  grid-template-columns: 36px 1fr;
  grid-template-rows: 20px 21px;
  border-bottom: 1px solid #303945;
  height: 42px;
}
.app {
  grid-row: 1 / 3;
  width: 35px;
  height: 38px;
  background: linear-gradient(#a7a8aa, #77797c);
  border: solid #12161c;
  border-width: 0 1px 1px 0;
  overflow: hidden;
}
.app svg { width: 34px; height: 38px; }
.app text { font: bold 36px "Liberation Sans", sans-serif; }
.titlebar { display: flex; align-items: center; height: 18px; padding-left: 4px; }
.ico { width: 24px; }
.titlebar > .ico:nth-child(5) { width: 20px; }
.doc { margin: 0 0 0 40px; width: 84px; font-size: 12px; font-weight: 400; }
.search {
  align-self: stretch;
  width: 178px;
  margin-left: 6px;
  padding: 0 2px;
  border: 0;
  background: #434d5e;
  color: #eee;
  font: italic 11px/16px "Noto Sans CJK SC", sans-serif;
}
.search::placeholder { color: #a3a9b3; }
.account { gap: 6px; margin: 0 6px 0 5px; }
.account .caret { margin-left: 9px; }
.titlebar .account svg, .drop svg { width: 15px; height: 15px; }
.drop { gap: 6px; padding: 0 4px; }
.helpdrop { margin-left: 5px; padding-left: 10px; border-left: 1px solid #4c5563; gap: 7px; }
.helpdrop .q { background: #fff; color: #1f5fa9; }
.win { display: flex; margin-left: auto; gap: 13px; }
.win svg { width: 13px; height: 13px; }
.menus { display: flex; height: 21px; align-items: flex-end; gap: 1px; }
.menus > button { height: 18px; padding: 0 9px; color: #bdc0c5; }
.menus > button:first-child { padding-left: 8px; }
.menus > .on { background: #434e60; color: #f2f2f2; }
.inner { gap: 5px; padding-bottom: 3px; }

/* ribbon */
.rtabs { display: flex; height: 21px; align-items: flex-end; color: #bdc0c5; }
.rtabs button { height: 18px; padding: 0 10px; }
.rtabs .on { background: var(--panel); color: #fff; padding: 0 9px 0 7px; margin-right: 1px; }
.rtabs .fold { margin-left: 12px; gap: 5px; }
.fold b { width: 13px; height: 7px; border-radius: 2px; background: var(--light); display: grid; place-items: center; }
.fold b .caret { background: #333; }
.ribbon { display: flex; height: 97px; gap: 3px; padding-bottom: 1px; }
.panel { background: var(--panel); display: flex; flex-direction: column; justify-content: space-between; flex-shrink: 0; }
.draw { width: 205px; margin-right: -2px; }
.modify { width: 132px; margin-right: -1px; }
.tools { display: flex; align-items: flex-start; }
.big { flex-direction: column; padding-top: 7px; justify-content: flex-start; }
.big svg { width: 32px; height: 32px; margin-bottom: 4px; }
.big .caret { margin-top: 2px; }
.w1 { width: 34px; }
.w2 { width: 46px; }
.w3 { width: 50px; }
.stack { padding-top: 4px; }
.stack button { height: 24px; padding-left: 3px; gap: 6px; }
.cells { display: grid; grid-template-columns: 29px 29px 40px 32px; grid-auto-rows: 24px; padding-top: 4px; }
.cells button:nth-child(4n + 3) { gap: 6px; padding-left: 4px; }
.ptitle { height: 16px; gap: 6px; }
.draw .ptitle { padding-right: 4px; }
.fly {
  width: 58px;
  margin-top: 1px;
  background: var(--fly);
  flex-direction: column;
  justify-content: flex-start;
  padding: 4px 0;
}
.fly svg, .biga { width: 32px; height: 32px; margin-bottom: 4px; }
.biga { font: 38px/32px "Open Sans", sans-serif; color: var(--light); text-align: center; }
.fly .caret { margin-top: auto; }
.view { width: 60px; margin-left: -1px; }
.view .big { width: 60px; }
.ptitle .launch { width: 6px; height: 6px; margin-left: 3px; }

/* drawing tabs */
.files { display: flex; height: 28px; align-items: flex-end; padding-left: 14px; border-bottom: 1px solid #141921; }
.file {
  height: 22px;
  background: #2b3440;
  clip-path: polygon(0 100%, 3px 80%, 8px 20%, 14px 0, calc(100% - 14px) 0, calc(100% - 8px) 20%, calc(100% - 3px) 80%, 100% 100%);
  justify-content: flex-start;
  padding-left: 12px;
  color: #c9ccd0;
}
.file.first { width: 124px; }
.file.on { width: 133px; margin-left: -4px; padding: 0 18px 0 15px; background: var(--panel); color: #fff; justify-content: space-between; }
.file.on svg { width: 11px; height: 11px; opacity: .7; }
.file.add { width: 26px; height: 18px; padding: 0; justify-content: center; margin: 0 0 2px; clip-path: polygon(0 0, 70% 0, 100% 100%, 25% 100%); }
.file.add svg { width: 9px; height: 9px; }
.stdbar { background: var(--panel); height: 29px; padding: 3px 0 2px; flex-shrink: 0; }
.box { display: flex; width: max-content; height: 24px; padding: 0 0 0 2px; border: 1px solid #222933; border-left: 0; }
.box button { width: 23px; }
.box .thin { width: 13px; }
.box hr { width: 1px; margin: 2px 1px; background: #5a626e; }

/* work area */
.work { flex: 1; min-height: 0; display: flex; background: var(--panel); }
.strip { display: flex; flex-direction: column; align-items: center; overflow: hidden; flex-shrink: 0; padding-top: 9px; background: var(--panel) linear-gradient(#8b929c 1px, transparent 1px 2px, #8b929c 2px) center 3px / 14px 3px no-repeat; }
.strip button { height: 22px; }
.left1 { width: 20px; border-right: 2px solid #28303c; align-items: flex-start; }
.left1 button { margin-left: -2px; }
.left2 { width: 28px; border-right: 2px solid #8b9197; box-shadow: inset -2px 0 #28303c; padding-right: 1px; }
.right { width: 26px; border-left: 2px solid #28303c; }
.right hr { width: 22px; height: 1px; margin: 1px 0; background: var(--light); }
.canvas { position: relative; flex: 1; background: #fff; color: #111; overflow: hidden; border-right: 1px solid #8b9197; }
.viewlabel { display: flex; padding: 4px 1px; }
.ucs { position: absolute; left: 4px; bottom: 5px; width: 80px; height: 84px; }
.ucs path, .cross path { fill: none; stroke: #666; }
.ucs text { font: 300 18px "Open Sans", sans-serif; fill: #777; }
.cross { position: absolute; left: 395px; bottom: 26px; width: 72px; height: 42px; }
.navbox { position: absolute; top: 1px; right: 1px; width: 31px; height: 234px; border: 1px solid #d4d4d4; color: #cfe4ec; font-size: 10px; padding: 55px 4px 0 0; text-align: right; }
.navbox svg { position: absolute; left: 8px; bottom: 20px; width: 6px; height: 6px; fill: none; stroke: #b9d6e0; }
.cmd {
  position: absolute;
  bottom: 0;
  left: 205px;
  right: 204px;
  height: 27px;
  display: flex;
  border: 1px solid #7f868e;
  border-radius: 3px;
  background: #fff;
  overflow: hidden;
}
.grip { display: flex; align-items: center; width: 54px; padding-left: 4px; gap: 5px; background: #2b3542; }
.dots { width: 5px; height: 18px; background: radial-gradient(circle, #ccc 1px, transparent 1px) 0 0 / 3px 3px; }
.grip .x { width: 11px; height: 11px; }
.grip button + button { margin-left: 4px; }
.recent { gap: 2px; padding: 0 3px 0 4px; border-left: 1px solid #666; }
.recent svg { height: 12px; }
.cmd .caret { background: #555; }
.cmd input { flex: 1; min-width: 0; border: solid #777; border-width: 0 0 0 1px; margin: 4px 0; outline: 0; background: none; }
.more { padding: 0 3px; }

/* layouts and status */
.layouts { display: flex; height: 22px; align-items: flex-start; padding-left: 5px; flex-shrink: 0; color: #b8bcc2; border-top: 1px solid #4a535f; }
.layouts button { height: 18px; width: 54px; background: #2b3440; clip-path: polygon(0 0, 100% 0, calc(100% - 8px) 100%, 8px 100%); }
.layouts .on { width: 47px; background: var(--panel); color: #fff; font-weight: 700; }
.layouts .add { width: 24px; margin-left: 4px; clip-path: polygon(20% 0, 100% 0, 80% 100%, 0 100%); }
.layouts svg { width: 9px; height: 9px; }
.status { display: flex; justify-content: flex-end; gap: 3px; height: 22px; padding-top: 1px; flex-shrink: 0; }
.status div { display: flex; background: var(--panel); border-top: 1px solid #465060; }
.status button { width: 24px; }
.status .arr { width: 15px; }
.status .txt { width: 27px; }
.status .ratio { width: 33px; gap: 4px; font-size: 11px; }
.status .on { background: var(--blue); width: 22px; }
.tight { gap: 2px; }
.status .trust { width: 28px; }
.trust svg { width: 24px; height: 20px; }
.pointer { position: absolute; left: 272px; top: 36px; width: 14px; height: 20px; fill: #fff; stroke: #222; }
```
